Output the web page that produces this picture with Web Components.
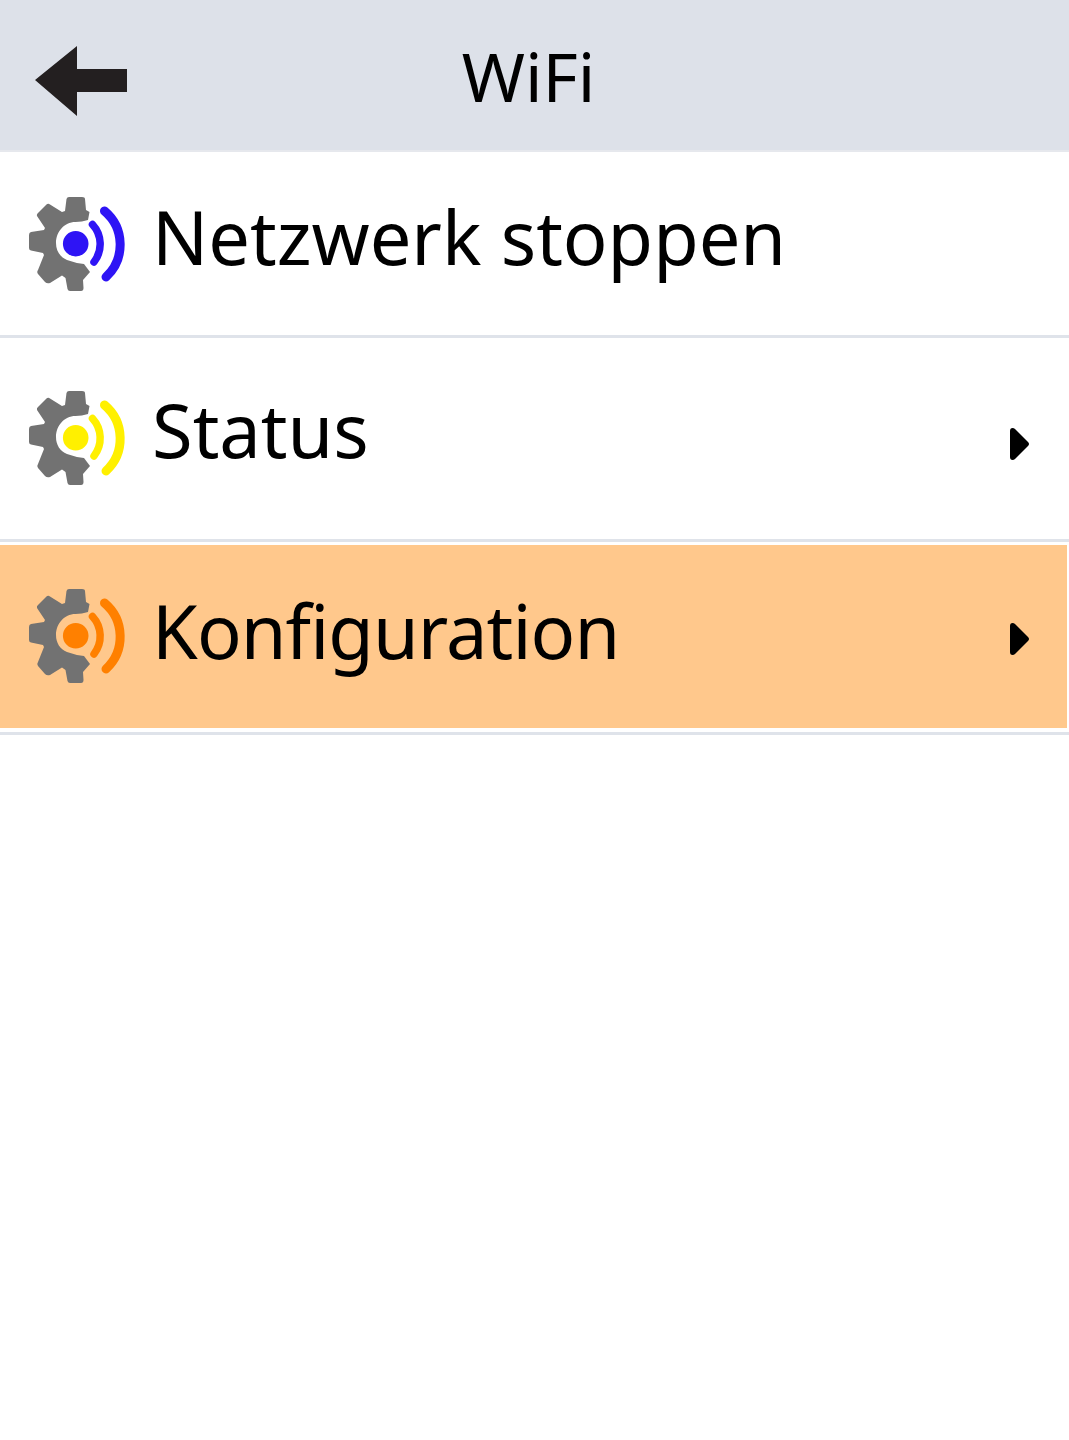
<!DOCTYPE html>
<html>
<head>
<meta charset="utf-8">
<style>
  html, body{ margin: 0; background: #fff; }
  body{ font-family: "Noto Sans", "Open Sans", sans-serif; color: #000; }
</style>
</head>
<body>
<wifi-screen>
  <menu-row color="#2e14f5" height="183" nudge="-14" icon-nudge="0" arrow="12" spacing="0">Netzwerk stoppen</menu-row>
  <menu-row color="#fff000" height="201" nudge="-18" icon-nudge="-2" arrow="11" spacing="0" more>Status</menu-row>
  <menu-row color="#ff8000" height="183" nudge="-12" icon-nudge="-1" arrow="5" spacing="-0.9" more active>Konfiguration</menu-row>
</wifi-screen>
<script>
class WifiScreen extends HTMLElement {
  constructor(){
    super();
    var shadowRoot = this.attachShadow({mode: 'open'});
    shadowRoot.innerHTML = `
      <style>
        :host{
          display: block;
          min-height: 1440px;
        }
        #header{
          height: 150px;
          display: grid;
          grid-template-columns: 1fr auto 1fr;
          align-items: center;
          background-color: #dde1e9;
          border-bottom: 2px solid #e6e8ed;
        }
        #back{
          display: block;
          margin-left: 35px;
          margin-top: 11px;
        }
        #title{
          font-size: 68px;
          line-height: 80px;
          margin-top: 2px;
          margin-right: 12px;
          color: #000;
        }
      </style>
      <div id="header">
        <svg id="back" width="92" height="70" viewBox="35 46 92 70"><path fill="#231f20" d="M35 80 77 46V69H127V92H77V116Z"/></svg>
        <div id="title">WiFi</div>
        <div></div>
      </div>
      <slot></slot>
    `;
  }
}
customElements.define('wifi-screen', WifiScreen);

class MenuRow extends HTMLElement {
  constructor(){
    super();
    var shadowRoot = this.attachShadow({mode: 'open'});
    var color = this.getAttribute('color');
    var height = this.getAttribute('height');
    var nudge = this.getAttribute('nudge');
    var icon_nudge = this.getAttribute('icon-nudge');
    var arrow = this.getAttribute('arrow');
    var spacing = this.getAttribute('spacing');
    var more = this.hasAttribute('more');
    var active = this.hasAttribute('active');

    shadowRoot.innerHTML = `
      <style>
        :host{
          display: block;
        }
        #row{
          height: ${height}px;
          display: flex;
          align-items: center;
          padding-left: 20px;
          padding-right: 40px;
          margin-right: ${active ? 2 : 0}px;
          background-color: ${active ? '#ffc88c' : 'transparent'};
        }
        #line{
          height: 3px;
          background-color: #dfe3ea;
        }
        #gap{
          height: ${active ? 4 : 0}px;
        }
        #top-gap{
          height: ${active ? 3 : 0}px;
        }
        #icon{
          flex: none;
          display: block;
          margin-top: ${icon_nudge}px;
        }
        #label{
          flex: 1;
          margin-left: 22px;
          font-size: 74px;
          line-height: 90px;
          letter-spacing: ${spacing}px;
          margin-top: ${nudge}px;
          white-space: nowrap;
        }
        #arrow{
          flex: none;
          display: block;
          margin-top: ${arrow}px;
          margin-right: ${active ? -2 : 0}px;
        }
      </style>
      <div id="top-gap"></div>
      <div id="row">
        <svg id="icon" width="110" height="110" viewBox="20 189 110 110">
          <path fill="#727272" d="M66.500 199Q67 197 69 197H82Q85 197 85 199L86 210L89.500 212L88 220Q82 222 75.500 222C64 222 56 232 56 243C56 251 60 257 67 260Q75 263 84 264L90 272L83 280L83.500 288Q83.500 291 81 291H70Q68 291 67.500 289L65.500 278L62 275.500L50 283Q47 284 45 282L38 274Q36.500 272 38 270L44 255L43 253L31 250.500Q29 250 29 248V235Q29 232.500 31 232L44 230L45 228L37 216Q36.500 214 38 213L46 205Q48 203 50 204.500L62 212L65 211Z"/>
          <circle cx="75.700" cy="243.700" r="12.800" fill="${color}"/>
          <path fill="none" stroke="${color}" stroke-width="7.500" stroke-linecap="round" d="M92.500 224.500A29 29 0 0 1 94 262"/>
          <path fill="none" stroke="${color}" stroke-width="9" stroke-linecap="round" d="M104.500 211A44 44 0 0 1 106 277"/>
        </svg>
        <div id="label"><slot></slot></div>
        ${more ? '<svg id="arrow" width="19" height="32" viewBox="0 0 19 32"><path d="M2.500 0Q4 0 5 1L18 14Q20 16 18 18L5 31Q4 32 2.500 32Q0 32 0 29V3Q0 0 2.500 0Z"/></svg>' : ''}
      </div>
      <div id="gap"></div>
      <div id="line"></div>
    `;
  }
}
customElements.define('menu-row', MenuRow);
</script>
</body>
</html>
